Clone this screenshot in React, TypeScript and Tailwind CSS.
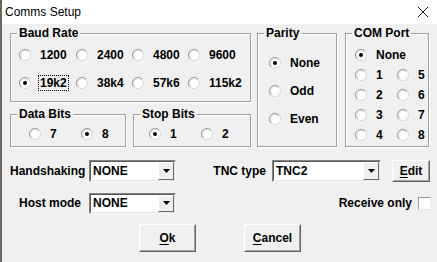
import React from "react";

function Radio({ checked }: { checked?: boolean }) {
  return (
    <svg width="12" height="12" viewBox="0 0 12 12" className="shrink-0">
      <circle cx="6" cy="6" r="5.5" fill="#fff" stroke="#d6d6d6" strokeWidth="1" />
      <path d="M2.1 9.9 A5.5 5.5 0 0 1 9.9 2.1" fill="none" stroke="#9c9c9c" strokeWidth="1" />
      <path d="M3 9 A4.2 4.2 0 0 1 9 3" fill="none" stroke="#e0e0e0" strokeWidth="1" />
      {checked && <circle cx="6" cy="6" r="2" fill="#000" />}
    </svg>
  );
}

function Opt({ label, checked, focus }: { label: string; checked?: boolean; focus?: boolean }) {
  return (
    <div className={`flex items-center h-[20px] ${focus ? "gap-[7px]" : "gap-[9px]"}`}>
      <Radio checked={checked} />
      {focus ? (
        <span className="border border-dotted border-black px-[1px] leading-[14px]">{label}</span>
      ) : (
        <span className="leading-[14px]">{label}</span>
      )}
    </div>
  );
}

function Group({ title, className, children }: { title: string; className?: string; children: React.ReactNode }) {
  return (
    <div className={`relative border border-[#a0a0a0] shadow-[inset_1px_1px_0_#fff,1px_1px_0_#fff] ${className ?? ""}`}>
      <span className="absolute -top-[8px] left-[6px] bg-[#f0f0f0] px-[2px] leading-[14px]">{title}</span>
      {children}
    </div>
  );
}

function Combo({ value, className }: { value: string; className?: string }) {
  return (
    <div className={`border border-[#828282] border-b-[#f8f8f8] border-r-[#f8f8f8] ${className ?? ""}`}>
      <div className="h-full border border-[#5a5a5a] border-b-[#e3e3e3] border-r-[#e3e3e3] bg-white flex items-center">
        <span className="flex-1 pl-[2px] leading-[14px]">{value}</span>
        <div className="w-[16px] h-full bg-[#f0f0f0] border border-white border-b-[#6b6b6b] border-r-[#6b6b6b] flex items-center justify-center">
          <svg width="7" height="4" viewBox="0 0 7 4">
            <path d="M0 0 H7 L3.5 4 Z" fill="#000" />
          </svg>
        </div>
      </div>
    </div>
  );
}

function Btn({ first, rest, className }: { first: string; rest: string; className?: string }) {
  return (
    <div className={`border border-white border-b-[#646464] border-r-[#646464] bg-[#f0f0f0] ${className ?? ""}`}>
      <div className="h-full border border-[#f0f0f0] border-b-[#a0a0a0] border-r-[#a0a0a0] flex items-center justify-center">
        <span className="leading-[14px]">
          <span className="underline underline-offset-[2px]">{first}</span>
          {rest}
        </span>
      </div>
    </div>
  );
}

export default function App() {
  return (
    <div className="w-[437px] h-[262px] overflow-hidden bg-[#f0f0f0] border-l-2 border-[#6b675c] font-['Liberation_Sans',Arial,sans-serif] text-[12px] text-black flex flex-col">
      {/* title bar */}
      <div className="h-[24px] shrink-0 bg-white flex items-center justify-between pl-[3px] pr-[8px]">
        <span className="font-normal text-[12px]">Comms Setup</span>
        <svg width="12" height="12" viewBox="0 0 12 12">
          <path d="M1 1 L11 11 M11 1 L1 11" stroke="#1a1a1a" strokeWidth="1" />
        </svg>
      </div>

      <div className="font-bold pl-[8px] flex flex-col">
        {/* group boxes */}
        <div className="mt-[9px] flex h-[114px]">
          <div className="w-[241px] flex flex-col">
            <Group title="Baud Rate" className="h-[69px]">
              <div className="pl-[8px] pt-[11px] flex flex-col gap-[8px]">
                <div className="grid grid-cols-[57px_56px_56px_1fr]">
                  <Opt label="1200" />
                  <Opt label="2400" />
                  <Opt label="4800" />
                  <Opt label="9600" />
                </div>
                <div className="grid grid-cols-[57px_56px_56px_1fr]">
                  <Opt label="19k2" checked focus />
                  <Opt label="38k4" />
                  <Opt label="57k6" />
                  <Opt label="115k2" />
                </div>
              </div>
            </Group>
            <div className="mt-[12px] flex gap-[7px]">
              <Group title="Data Bits" className="w-[116px] h-[33px]">
                <div className="pl-[18px] pt-[9px] grid grid-cols-[52px_1fr]">
                  <Opt label="7" />
                  <Opt label="8" checked />
                </div>
              </Group>
              <Group title="Stop Bits" className="w-[118px] h-[33px]">
                <div className="pl-[15px] pt-[9px] grid grid-cols-[52px_1fr]">
                  <Opt label="1" checked />
                  <Opt label="2" />
                </div>
              </Group>
            </div>
          </div>

          <Group title="Parity" className="ml-[6px] w-[80px] h-[114px]">
            <div className="pl-[11px] pt-[19px] flex flex-col gap-[8px]">
              <Opt label="None" checked />
              <Opt label="Odd" />
              <Opt label="Even" />
            </div>
          </Group>

          <Group title="COM Port" className="ml-[8px] w-[84px] h-[114px]">
            <div className="pl-[9px] pt-[11px] flex flex-col">
              <Opt label="None" checked />
              {[
                ["1", "5"],
                ["2", "6"],
                ["3", "7"],
                ["4", "8"],
              ].map(([a, b]) => (
                <div key={a} className="grid grid-cols-[42px_1fr]">
                  <Opt label={a} />
                  <Opt label={b} />
                </div>
              ))}
            </div>
          </Group>
        </div>

        {/* handshaking / tnc row */}
        <div className="mt-[13px] h-[22px] flex items-center">
          <div className="w-[79px] leading-[14px]">Handshaking</div>
          <Combo value="NONE" className="w-[87px] h-[22px]" />
          <div className="w-[96px] flex justify-end pr-[6px] leading-[14px]">TNC type</div>
          <Combo value="TNC2" className="w-[109px] h-[22px]" />
          <Btn first="E" rest="dit" className="ml-[11px] w-[38px] h-[22px]" />
        </div>

        {/* host mode row */}
        <div className="mt-[10px] h-[22px] flex items-center">
          <div className="w-[79px] flex justify-end pr-[8px] leading-[14px]">Host mode</div>
          <Combo value="NONE" className="w-[87px] h-[21px]" />
          <div className="flex-1 flex justify-end items-center pr-[6px] gap-[6px]">
            <span className="leading-[14px]">Receive only</span>
            <div className="w-[13px] h-[13px] bg-white border border-[#9a9a9a] border-b-[#e8e8e8] border-r-[#e8e8e8]" />
          </div>
        </div>

        {/* buttons */}
        <div className="mt-[10px] flex pl-[129px] gap-[48px]">
          <Btn first="O" rest="k" className="w-[57px] h-[28px]" />
          <Btn first="C" rest="ancel" className="w-[57px] h-[28px]" />
        </div>
      </div>
    </div>
  );
}
